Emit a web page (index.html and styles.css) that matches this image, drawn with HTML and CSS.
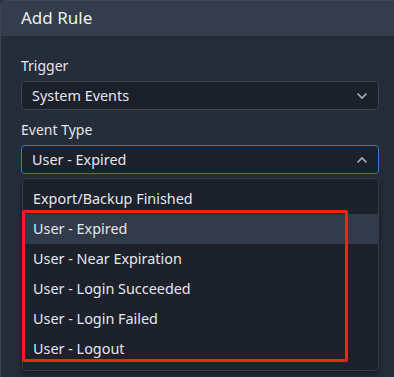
FILE: index.html
```html
<!DOCTYPE html>
<html lang="en">
<head>
  <meta charset="UTF-8">
  <meta name="viewport" content="width=device-width, initial-scale=1.0">
  <title>Add Rule</title>
  <link rel="stylesheet" href="styles.css">
</head>
<body>

  <div class="panel">
    <div class="panel-header">Add Rule</div>
    <div class="panel-body">

      <label class="field-label">Trigger</label>
      <div class="select">
        <span>System Events</span>
        <svg class="chevron" width="12" height="8" viewBox="0 0 12 8"><path d="M1.5 1.5 L6 6 L10.5 1.5" fill="none" stroke="currentColor" stroke-width="1.6"/></svg>
      </div>

      <label class="field-label">Event Type</label>
      <div class="select-wrap">
        <div class="select select-open">
          <span>User - Expired</span>
          <svg class="chevron" width="12" height="8" viewBox="0 0 12 8"><path d="M1.5 6.5 L6 2 L10.5 6.5" fill="none" stroke="currentColor" stroke-width="1.6"/></svg>
        </div>

        <ul class="dropdown">
          <li>Export/Backup Finished</li>
          <li class="active">User - Expired</li>
          <li>User - Near Expiration</li>
          <li>User - Login Succeeded</li>
          <li>User - Login Failed</li>
          <li>User - Logout</li>
        </ul>
        <div class="highlight-box"></div>
      </div>

    </div>
  </div>

</body>
</html>
```

FILE: styles.css
```css
* {
  margin: 0;
  padding: 0;
  box-sizing: border-box;
}
body {
  font-family: "Noto Sans", "Open Sans", sans-serif;
  background-color: #262d3a;
  overflow: hidden;
}
.panel {
  width: 100%;
  height: 377px;
  border: 1px solid #3e4756;
  border-right: none;
  border-bottom: none;
  border-radius: 5px 0 0 0;
  background-color: #262d3a;
  color: #e4e7ec;
}
.panel-header {
  height: 35px;
  padding-left: 20px;
  background-color: #333d4c;
  font-size: 17px;
  line-height: 33px;
  color: #eef0f3;
}
.panel-body {
  padding: 20px 14px 0 20px;
}
.field-label {
  display: block;
  font-size: 14px;
  line-height: 20px;
  margin-bottom: 5px;
}
.select {
  display: flex;
  align-items: center;
  justify-content: space-between;
  width: 358px;
  height: 29px;
  padding: 0 10px 0 10px;
  background-color: #1b202a;
  border: 1px solid #3b4453;
  border-radius: 4px;
  font-size: 14.4px;
  margin-bottom: 10px;
}
.select-open {
  border-color: #2f78c8;
  margin-bottom: 0;
}
.chevron {
  color: #a9b0bb;
}
.select-wrap {
  position: relative;
}
.dropdown {
  position: absolute;
  top: 33px;
  left: 1px;
  width: 357px;
  list-style: none;
  padding: 5px 0 6px;
  background-color: #1c212c;
  border: 1px solid #343c4a;
  border-radius: 4px;
  box-shadow: 0 3px 6px rgba(0, 0, 0, 0.45);
  font-size: 14.4px;
}
.dropdown li {
  height: 30px;
  line-height: 30px;
  padding-left: 10px;
}
.dropdown li.active {
  background-color: #323b4a;
}
.highlight-box {
  position: absolute;
  top: 65px;
  left: 1px;
  width: 326px;
  height: 152px;
  border: 3px solid #ff1c1c;
  border-radius: 2px;
}
```
